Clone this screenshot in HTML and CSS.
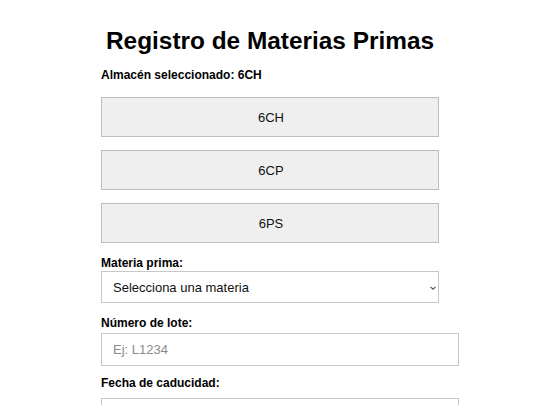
FILE: index.html
```html
<!DOCTYPE html>
<html lang="es">
<head>
<meta charset="utf-8">
<title>Registro de Materias Primas</title>
<link rel="stylesheet" href="styles.css">
</head>
<body>
<main class="container">
  <h1 class="title">Registro de Materias Primas</h1>
  <p class="selected">Almacén seleccionado: 6CH</p>
  <div class="stores">
    <button class="store-btn" type="button">6CH</button>
    <button class="store-btn" type="button">6CP</button>
    <button class="store-btn" type="button">6PS</button>
  </div>
  <label class="field-label" for="materia">Materia prima:</label>
  <div class="select-wrap">
    <select class="field-select" id="materia">
      <option>Selecciona una materia</option>
    </select>
    <svg class="select-arrow" width="6" height="4" viewBox="0 0 6 4" aria-hidden="true"><path d="M0.5 0.8 L3 3.2 L5.5 0.8" fill="none" stroke="#555" stroke-width="1.1"/></svg>
  </div>
  <label class="field-label field-label--lote" for="lote">Número de lote:</label>
  <input class="field-input" id="lote" type="text" placeholder="Ej: L1234">
  <label class="field-label field-label--fecha" for="fecha">Fecha de caducidad:</label>
  <input class="field-input" id="fecha" type="text">
</main>
</body>
</html>
```
FILE: styles.css
```css
html, body {
  margin: 0;
  padding: 0;
  background: #ffffff;
}
body {
  font-family: "Liberation Sans", Arial, sans-serif;
  color: #000;
}
.container {
  width: 338px;
  margin: 0 auto;
  display: flex;
  flex-direction: column;
  align-items: flex-start;
}
.title {
  align-self: stretch;
  text-align: center;
  font-size: 24.4px;
  font-weight: bold;
  margin: 26px -20px 0;
  line-height: 30px;
  white-space: nowrap;
}
.selected {
  font-size: 12px;
  font-weight: bold;
  margin: 11px 0 0;
  line-height: 16px;
}
.stores {
  align-self: stretch;
  display: flex;
  flex-direction: column;
  gap: 13px;
  margin-top: 14px;
}
.store-btn {
  width: 100%;
  height: 40px;
  background: #efefef;
  border: 1px solid #bdbdbd;
  font-family: "Liberation Sans", Arial, sans-serif;
  font-size: 13px;
  color: #111;
  padding: 0 0 0 2px;
}
.field-label {
  font-size: 12px;
  font-weight: bold;
  line-height: 16px;
  margin: 12px 0 0;
}
.field-label--lote {
  margin-bottom: 2px;
}
.field-label--fecha {
  margin-top: 9px;
  margin-bottom: 7px;
}
.select-wrap {
  position: relative;
  width: 338px;
}
.field-select {
  display: block;
  width: 338px;
  height: 32px;
  box-sizing: border-box;
  border: 1px solid #c8c8c8;
  background: #fff;
  font-family: "Liberation Sans", Arial, sans-serif;
  font-size: 13px;
  color: #111;
  padding: 0 11px;
  border-radius: 0;
  appearance: none;
  -webkit-appearance: none;
}
.select-arrow {
  position: absolute;
  right: 3px;
  top: 15px;
  pointer-events: none;
}
.field-input {
  width: 358px;
  height: 33px;
  box-sizing: border-box;
  border: 1px solid #c8c8c8;
  font-family: "Liberation Sans", Arial, sans-serif;
  font-size: 13px;
  padding: 0 11px;
  border-radius: 0;
}
.field-input::placeholder {
  color: #8a8a8a;
}
```
